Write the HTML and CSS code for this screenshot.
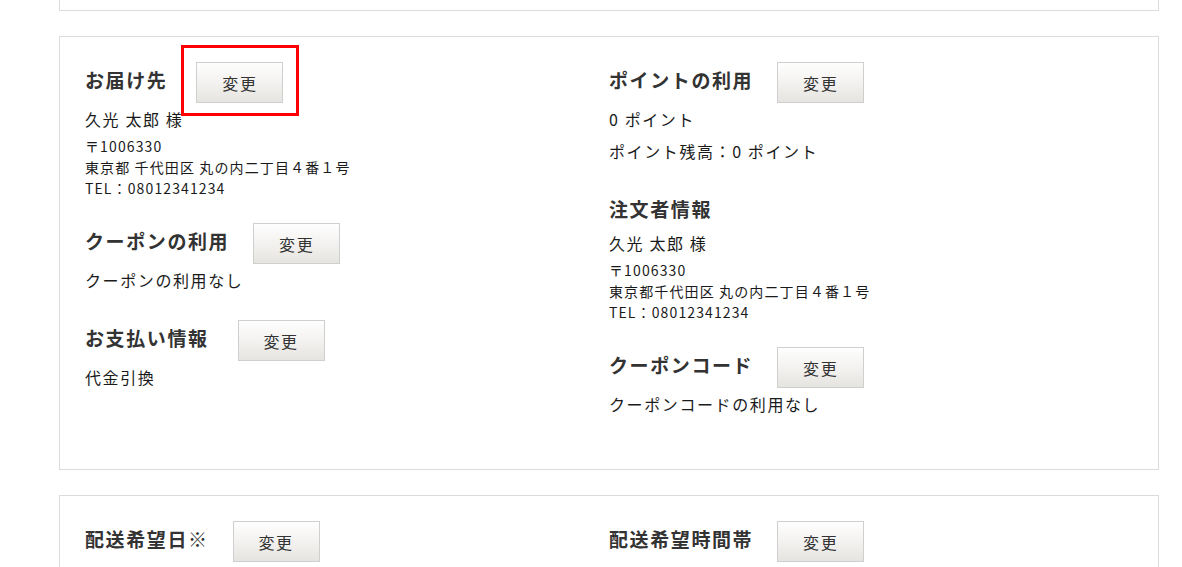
FILE: index.html
```html
<!DOCTYPE html>
<html lang="ja">
<head>
<meta charset="utf-8">
<title>注文内容の確認</title>
<link rel="stylesheet" href="styles.css">
</head>
<body>
<div class="page">
  <section class="card card--tail"></section>

  <section class="card">
    <div class="cols">
      <div class="col">
        <div class="block">
          <div class="block-head">
            <h2 class="block-title block-title--wide">お届け先</h2>
            <span class="btn-wrap">
              <button class="btn" type="button">変更</button>
              <span class="highlight"></span>
            </span>
          </div>
          <p class="text">久光 太郎 様</p>
          <div class="addr">
            <p>〒1006330</p>
            <p>東京都 千代田区 丸の内二丁目４番１号</p>
            <p>TEL：08012341234</p>
          </div>
        </div>

        <div class="block">
          <div class="block-head">
            <h2 class="block-title">クーポンの利用</h2>
            <button class="btn" type="button">変更</button>
          </div>
          <p class="text">クーポンの利用なし</p>
        </div>

        <div class="block">
          <div class="block-head">
            <h2 class="block-title block-title--wide">お支払い情報</h2>
            <button class="btn" type="button">変更</button>
          </div>
          <p class="text">代金引換</p>
        </div>
      </div>

      <div class="col">
        <div class="block">
          <div class="block-head">
            <h2 class="block-title">ポイントの利用</h2>
            <button class="btn" type="button">変更</button>
          </div>
          <p class="text">0 ポイント</p>
          <p class="text">ポイント残高：0 ポイント</p>
        </div>

        <div class="block">
          <div class="block-head">
            <h2 class="block-title">注文者情報</h2>
          </div>
          <p class="text">久光 太郎 様</p>
          <div class="addr">
            <p>〒1006330</p>
            <p>東京都千代田区 丸の内二丁目４番１号</p>
            <p>TEL：08012341234</p>
          </div>
        </div>

        <div class="block">
          <div class="block-head">
            <h2 class="block-title">クーポンコード</h2>
            <button class="btn" type="button">変更</button>
          </div>
          <p class="text">クーポンコードの利用なし</p>
        </div>
      </div>
    </div>
  </section>

  <section class="card">
    <div class="cols">
      <div class="col">
        <div class="block">
          <div class="block-head">
            <h2 class="block-title">配送希望日<span class="mark">※</span></h2>
            <button class="btn" type="button">変更</button>
          </div>
        </div>
      </div>
      <div class="col">
        <div class="block">
          <div class="block-head">
            <h2 class="block-title">配送希望時間帯</h2>
            <button class="btn" type="button">変更</button>
          </div>
        </div>
      </div>
    </div>
  </section>
</div>
</body>
</html>
```

FILE: styles.css
```css
* {
  box-sizing: border-box;
}

html, body {
  margin: 0;
  padding: 0;
  background: #fff;
}

body {
  font-family: "Noto Sans CJK JP", "Noto Sans", sans-serif;
  color: #1a1a1a;
  letter-spacing: 0.1em;
  overflow: hidden;
}

.page {
  width: 1100px;
  margin-left: 59px;
}

.card {
  border: 1px solid #dcdcdc;
  padding: 25px;
  margin-bottom: 25px;
}

.card--tail {
  height: 11px;
  padding: 0;
  border-top: none;
}

.cols {
  display: grid;
  grid-template-columns: 1fr 1fr;
}

.block {
  margin-bottom: 24px;
}

.block-head {
  display: flex;
  align-items: flex-start;
  gap: 24px;
}

.block-title {
  margin: 0;
  font-size: 19px;
  line-height: 36px;
  font-weight: bold;
  color: #333;
}

.block-title--wide {
  margin-right: 5px;
}

.mark {
  font-weight: normal;
}

.btn-wrap {
  position: relative;
  display: block;
}

.btn {
  display: block;
  width: 87px;
  height: 41px;
  padding: 0;
  border: 1px solid #cfcfcf;
  border-radius: 0;
  background: linear-gradient(to bottom, #fefefe 0%, #f3f2f0 50%, #e6e4e0 100%);
  font-family: inherit;
  font-size: 16px;
  letter-spacing: 0.1em;
  color: #333;
  cursor: pointer;
}

.highlight {
  position: absolute;
  left: -15px;
  top: -17px;
  width: 118px;
  height: 71px;
  border: 3px solid #f00;
  pointer-events: none;
}

.text {
  margin: 0;
  font-size: 16px;
  line-height: 32px;
}

.addr {
  margin-top: 1px;
}

.addr p {
  margin: 0;
  font-size: 14px;
  line-height: 21px;
  letter-spacing: 0.08em;
}
```
